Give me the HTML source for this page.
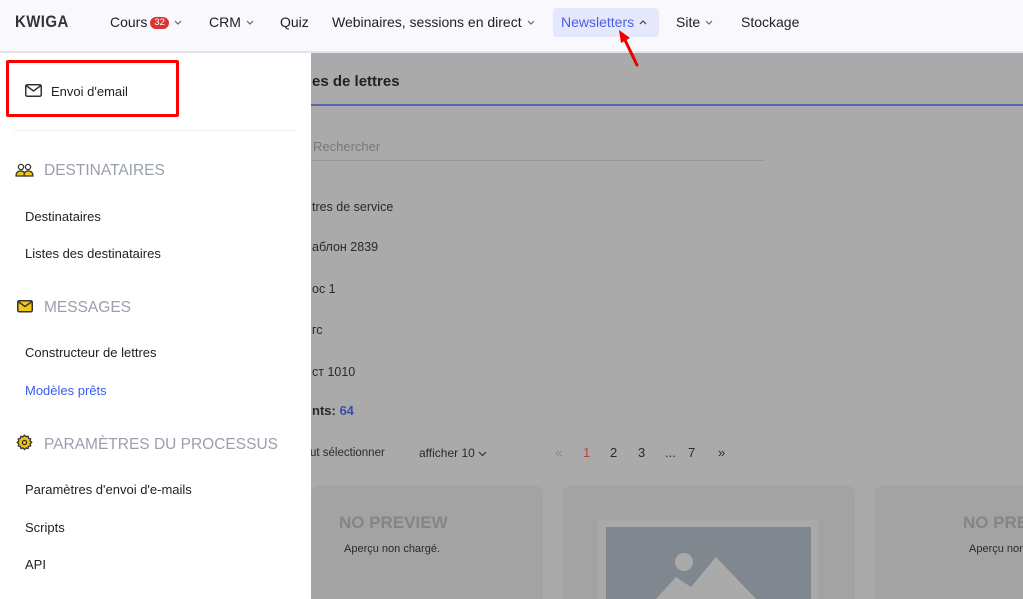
<!DOCTYPE html>
<html><head><meta charset="utf-8"><style>
*{margin:0;padding:0;box-sizing:border-box}
html,body{width:1023px;height:599px;overflow:hidden}
body{position:relative;font-family:"Liberation Sans","DejaVu Sans",sans-serif;background:#aaa}
.hdr{position:absolute;left:0;top:0;width:1023px;height:53px;background:#f9f9fd;border-bottom:2px solid #e2e2ea}
.it{position:absolute;top:14px;font-size:14px;color:#222;white-space:nowrap}
.it svg{vertical-align:2px;margin-left:5px}
.logo{position:absolute;left:15px;top:12px;font-weight:bold;font-size:17px;color:#333;letter-spacing:0.5px;transform:scaleX(0.88);transform-origin:left}
.badge{display:inline-block;background:#d33;color:#fff;font-size:9.5px;line-height:12px;border-radius:7px;padding:0 4px;vertical-align:2px;margin-left:3px}
.nl{position:absolute;left:553px;top:8px;width:106px;height:29px;background:#e5e7fa;border-radius:4px}
.side{position:absolute;left:0;top:53px;width:311px;height:546px;background:#fff}
.t{position:absolute;font-size:13px;color:#222;white-space:nowrap}
.h{position:absolute;font-size:15.5px;color:#9a9fae;white-space:nowrap}
.g{position:absolute;white-space:nowrap;font-size:12.5px;color:#2a2a2a}
.card{position:absolute;top:486px;height:120px;background:#a3a3a3;border-radius:8px}
</style></head><body>
<div class="hdr">
<div class="logo">KWIGA</div>
<div class="it" style="left:110px">Cours<span class="badge">32</span><svg width="8" height="5"><path d="M1 1l3 3 3-3" fill="none" stroke="#666" stroke-width="1.2"/></svg></div>
<div class="it" style="left:209px">CRM<svg width="8" height="5"><path d="M1 1l3 3 3-3" fill="none" stroke="#666" stroke-width="1.2"/></svg></div>
<div class="it" style="left:280px">Quiz</div>
<div class="it" style="left:332px">Webinaires, sessions en direct<svg width="8" height="5"><path d="M1 1l3 3 3-3" fill="none" stroke="#666" stroke-width="1.2"/></svg></div>
<div class="nl"></div>
<div class="it" style="left:561px;color:#4a62e8">Newsletters<svg width="8" height="5"><path d="M1 4l3-3 3 3" fill="none" stroke="#444" stroke-width="1.2"/></svg></div>
<div class="it" style="left:676px">Site<svg width="8" height="5"><path d="M1 1l3 3 3-3" fill="none" stroke="#666" stroke-width="1.2"/></svg></div>
<div class="it" style="left:741px">Stockage</div>
</div>
<!-- grey content -->
<div class="g" style="left:312px;top:73px;font-size:15px;font-weight:bold;color:#222">es de lettres</div>
<div style="position:absolute;left:311px;top:104px;width:712px;height:2px;background:#5565b0"></div>
<div class="g" style="left:313px;top:139px;font-size:13px;color:#777">Rechercher</div>
<div style="position:absolute;left:311px;top:160px;width:454px;height:1px;background:#999"></div>
<div class="g" style="left:312px;top:200px">tres de service</div>
<div class="g" style="left:312px;top:240px">аблон 2839</div>
<div class="g" style="left:312px;top:282px">ос 1</div>
<div class="g" style="left:312px;top:323px">гс</div>
<div class="g" style="left:312px;top:365px">ст 1010</div>
<div class="g" style="left:312px;top:403px;font-weight:bold;font-size:13px">nts: <span style="color:#3a4fa8">64</span></div>
<div class="g" style="left:310px;top:447px;font-size:11.5px">ut sélectionner</div>
<div class="g" style="left:419px;top:446px;font-size:12px">afficher 10 <svg width="9" height="6"><path d="M1 1l3.5 3.5 3.5-3.5" fill="none" stroke="#333" stroke-width="1.2"/></svg></div>
<div class="g" style="left:555px;top:445px;font-size:13px;color:#888">«</div>
<div class="g" style="left:583px;top:445px;font-size:13px;color:#b04a3a">1</div>
<div class="g" style="left:610px;top:445px;font-size:13px">2</div>
<div class="g" style="left:638px;top:445px;font-size:13px">3</div>
<div class="g" style="left:665px;top:445px;font-size:13px">...</div>
<div class="g" style="left:688px;top:445px;font-size:13px">7</div>
<div class="g" style="left:718px;top:445px;font-size:13px">»</div>
<div class="card" style="left:311px;width:232px"></div>
<div class="card" style="left:562px;width:293px"></div>
<div class="card" style="left:874px;width:160px"></div>
<div class="g" style="left:339px;top:513px;font-size:17px;font-weight:bold;color:#858585">NO PREVIEW</div>
<div class="g" style="left:344px;top:543px;font-size:11px">Aperçu non chargé.</div>
<div class="g" style="left:963px;top:513px;font-size:17px;font-weight:bold;color:#858585">NO PREVIEW</div>
<div class="g" style="left:969px;top:543px;font-size:11px">Aperçu non chargé.</div>
<div style="position:absolute;left:598px;top:520px;width:220px;height:90px;background:#a9a9a9"></div>
<svg style="position:absolute;left:606px;top:527px" width="205" height="72"><rect width="205" height="72" fill="#81878f"/><circle cx="78" cy="35" r="9" fill="#aaa"/><polygon points="50,72 70,50 85,60 110,30 150,72" fill="#aaa"/></svg>
<!-- arrow -->
<svg style="position:absolute;left:615px;top:28px" width="30" height="42"><line x1="22" y1="37" x2="9" y2="10" stroke="#e00" stroke-width="3" stroke-linecap="round"/><polygon points="4,2 15,10 6,15" fill="#e00"/></svg>
<!-- sidebar -->
<div class="side">
<div style="position:absolute;left:6px;top:7px;width:173px;height:57px;border:3px solid #f00;border-radius:2px"></div>
<svg style="position:absolute;left:25px;top:31px" width="17" height="13"><rect x="0.75" y="0.75" width="15.5" height="11.5" rx="1.5" fill="none" stroke="#333" stroke-width="1.5"/><path d="M1 1.5 L8.5 7 L16 1.5" fill="none" stroke="#333" stroke-width="1.5"/></svg>
<div class="t" style="left:51px;top:31px">Envoi d'email</div>
<div style="position:absolute;left:14px;top:77px;width:282px;height:1px;background:#eee"></div>
<svg style="position:absolute;left:15px;top:110px" width="20" height="14"><circle cx="6" cy="4" r="2.6" fill="none" stroke="#333" stroke-width="1.3"/><circle cx="13" cy="4" r="2.6" fill="none" stroke="#333" stroke-width="1.3"/><path d="M1 13 Q1 8 6 8 Q10 8 10 13Z" fill="#f3c515" stroke="#333" stroke-width="1.2"/><path d="M9 13 Q9 8 13 8 Q18 8 18 13Z" fill="#f3c515" stroke="#333" stroke-width="1.2"/></svg>
<div class="h" style="left:44px;top:109px">DESTINATAIRES</div>
<div class="t" style="left:25px;top:156px">Destinataires</div>
<div class="t" style="left:25px;top:193px">Listes des destinataires</div>
<svg style="position:absolute;left:17px;top:247px" width="16" height="13"><rect x="0.75" y="0.75" width="14.5" height="11" rx="1.5" fill="#f3c515" stroke="#333" stroke-width="1.5"/><path d="M1 1.5 L8 6.5 L15 1.5" fill="none" stroke="#333" stroke-width="1.4"/></svg>
<div class="h" style="left:44px;top:246px">MESSAGES</div>
<div class="t" style="left:25px;top:292px">Constructeur de lettres</div>
<div class="t" style="left:25px;top:330px;color:#3a5bf0">Modèles prêts</div>
<svg style="position:absolute;left:16px;top:381px" width="17" height="17" viewBox="0 0 24 24"><path d="M12 1.5l2 2.5 3-1 .7 3.1 3.1.7-1 3 2.5 2-2.5 2 1 3-3.1.7-.7 3.1-3-1-2 2.5-2-2.5-3 1-.7-3.1-3.1-.7 1-3L1.5 12 4 10 3 7l3.1-.7L6.8 3.2l3 1z" fill="#f3c515" stroke="#333" stroke-width="1.8" stroke-linejoin="round"/><circle cx="12" cy="12" r="3" fill="none" stroke="#333" stroke-width="1.8"/></svg>
<div class="h" style="left:44px;top:383px">PARAMÈTRES DU PROCESSUS</div>
<div class="t" style="left:25px;top:429px">Paramètres d'envoi d'e-mails</div>
<div class="t" style="left:25px;top:467px">Scripts</div>
<div class="t" style="left:25px;top:504px">API</div>
</div>
</body></html>
